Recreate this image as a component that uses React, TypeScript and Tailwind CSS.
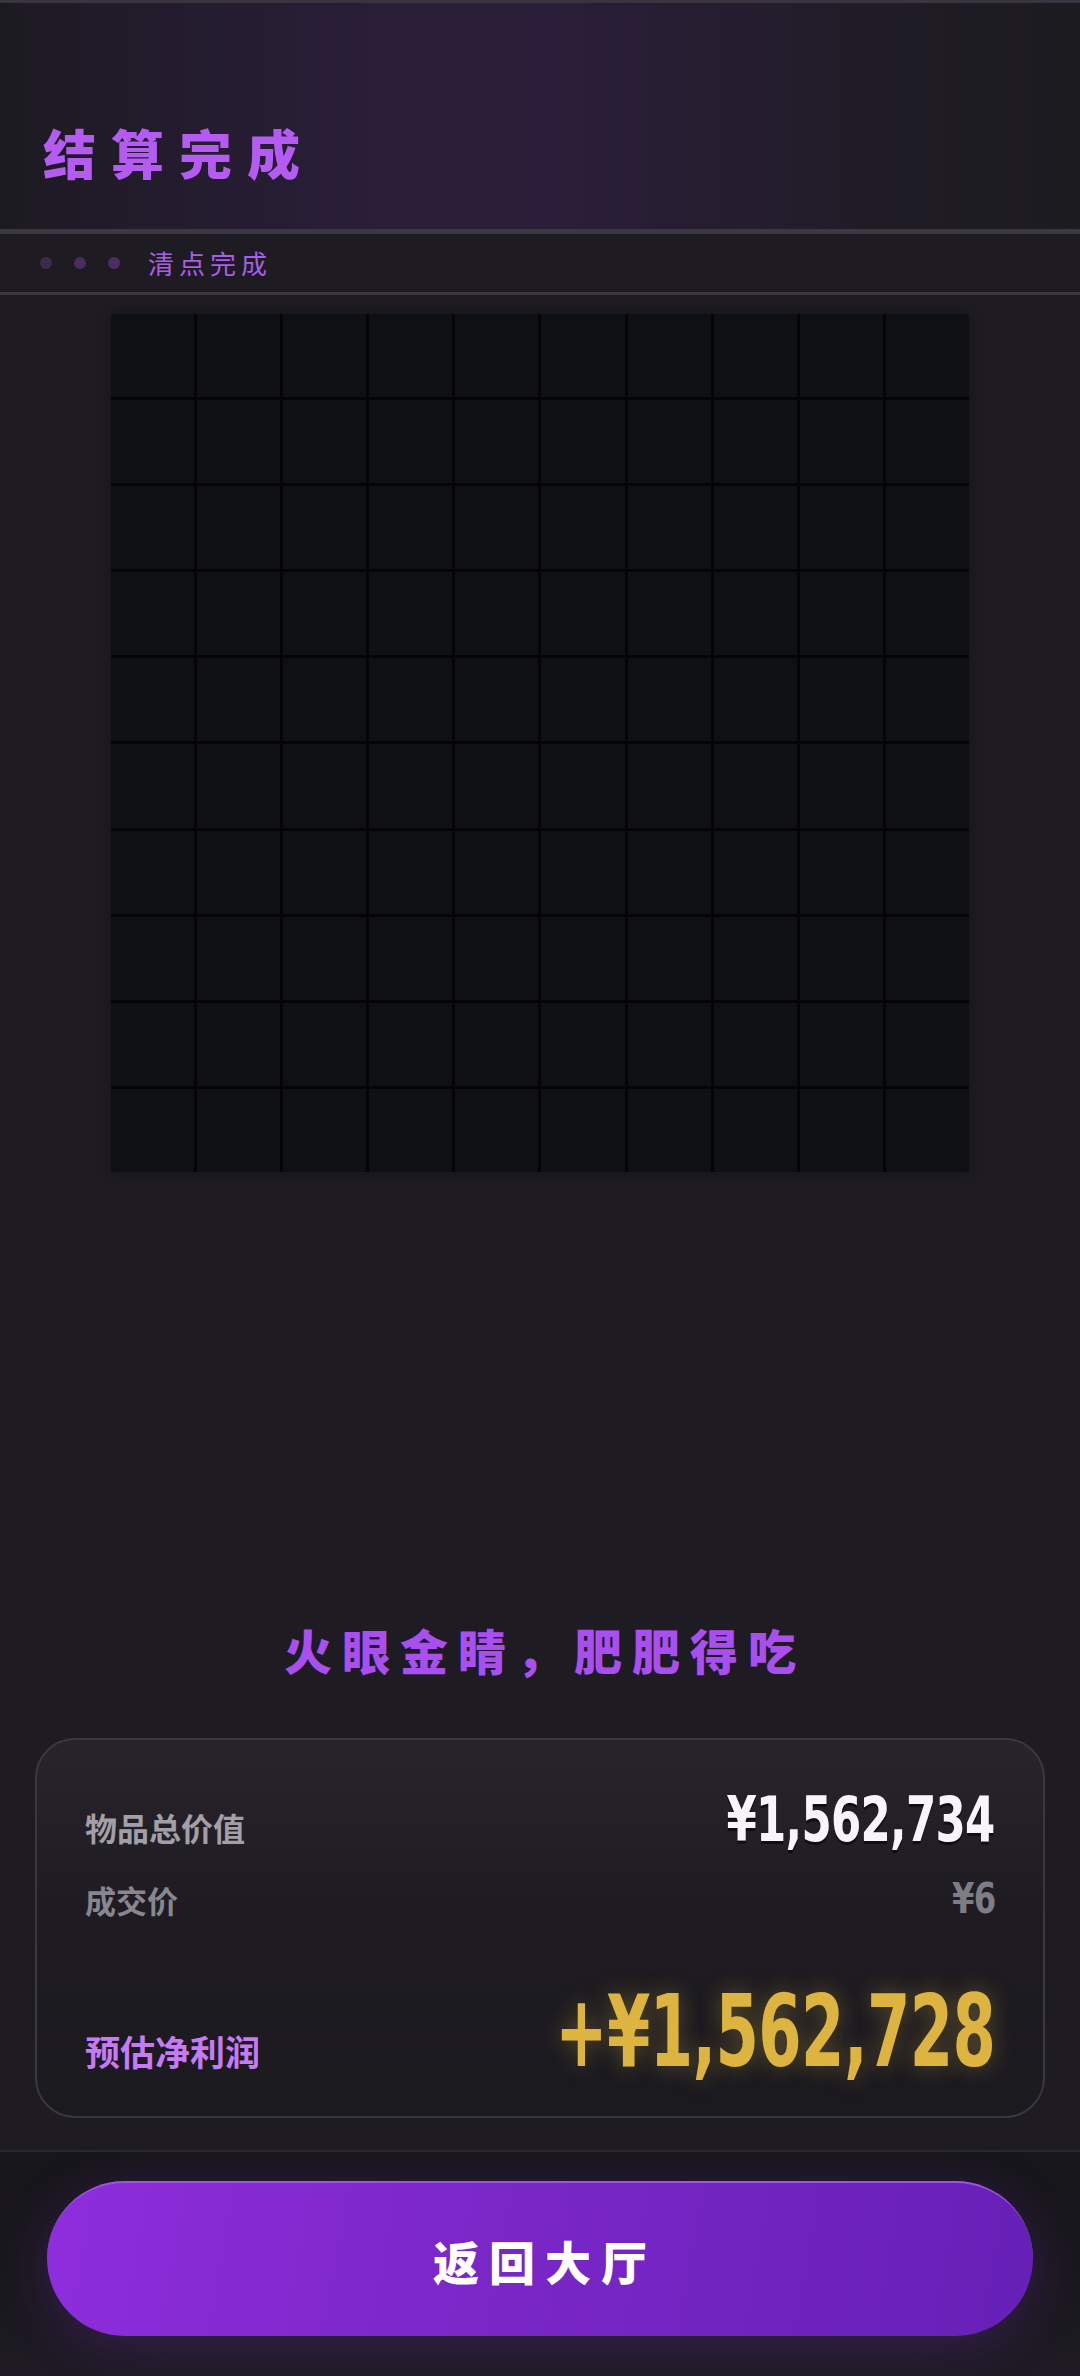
import React from "react";

const CELLS = Array.from({ length: 100 }, (_, i) => i);

function Row({
	label,
	value,
	labelClass,
	valueClass,
	className,
}: {
	label: string;
	value: string;
	labelClass: string;
	valueClass: string;
	className?: string;
}) {
	return (
		<div className={`flex flex-row items-baseline justify-between ${className ?? ""}`}>
			<span className={`font-bold leading-none ${labelClass}`}>{label}</span>
			<span className={`font-['DejaVu_Sans',sans-serif] font-bold leading-none origin-right tracking-[-1px] ${valueClass}`}>
				{value}
			</span>
		</div>
	);
}

export default function App() {
	return (
		<div className="w-[1080px] h-[2376px] flex flex-col overflow-hidden bg-[#1e1c22] font-['Noto_Sans_CJK_SC',sans-serif]">
			{/* header */}
			<header className="h-[229px] flex items-end pl-[43px] pb-[50px] border-t-[3px] border-[#3a3340] bg-[linear-gradient(90deg,#1c1a21_0%,#241c2f_18%,#2a1e38_35%,#2b1e3a_50%,#261d31_65%,#1f1c25_82%,#1c1b20_100%)]">
				<h1 className="text-[53px] leading-none font-black tracking-[15px] text-[#b45cf2]">结算完成</h1>
			</header>

			{/* status bar */}
			<div className="h-[66px] flex items-center pl-[40px] gap-[22px] bg-[#1e1c22] border-t-[5px] border-[#3b3842] border-b-[3px] border-b-[#38363e]">
				<div className="flex items-center gap-[22px]">
					<span className="w-[12px] h-[12px] rounded-full bg-[#3d2a50]" />
					<span className="w-[12px] h-[12px] rounded-full bg-[#482d60]" />
					<span className="w-[12px] h-[12px] rounded-full bg-[#4a2e63]" />
				</div>
				<span className="ml-[6px] text-[26px] leading-none tracking-[5px] text-[#a660e6]">清点完成</span>
			</div>

			{/* board */}
			<main className="flex flex-col items-center">
				<div className="mt-[19px] w-[858px] h-[858px] grid grid-cols-10 grid-rows-10 gap-[3px] bg-[#050507] shadow-[0_0_12px_rgba(0,0,0,0.35)]">
					{CELLS.map((c) => (
						<div key={c} className="bg-[#0f1013]" />
					))}
				</div>
				<p className="mt-[453px] text-[48px] leading-none font-black tracking-[10px] text-[#a94ff0] pl-[10px]">
					火眼金睛，肥肥得吃
				</p>
			</main>

			{/* summary card */}
			<section className="mt-[65px] mx-[35px] h-[380px] rounded-[40px] border-2 border-[#3a383f] bg-[linear-gradient(180deg,#27252b_0%,#1e1c22_45%,#1b1a1f_100%)] px-[48px] pt-[48px]">
				<Row
					label="物品总价值"
					value="¥1,562,734"
					labelClass="text-[32px] text-[#a29fa7]"
					valueClass="text-[63px] scale-x-[0.69] text-[#f7f5fb] [text-shadow:0_3px_0_rgba(0,0,0,0.55)]"
				/>
				<Row
					className="mt-[27px]"
					label="成交价"
					value="¥6"
					labelClass="text-[31px] text-[#88868e]"
					valueClass="text-[42px] scale-x-[0.77] text-[#7e7c84]"
				/>
				<Row
					className="mt-[62px]"
					label="预估净利润"
					value="+¥1,562,728"
					labelClass="text-[35px] text-[#c77af5]"
					valueClass="text-[99px] scale-x-[0.63] text-[#dcb43f] [text-shadow:0_0_28px_rgba(220,180,63,0.35)]"
				/>
			</section>

			{/* footer */}
			<footer className="mt-[32px] flex-1 flex flex-col border-t-2 border-[#2a282f] bg-[linear-gradient(180deg,#17161b_0%,#1a181e_60%,#1e1b24_100%)]">
				<button className="mt-[29px] mx-[47px] h-[155px] rounded-full border-t-2 border-[#9b55e3] bg-[linear-gradient(100deg,#8e2ddc_0%,#7a27c8_45%,#6620b6_100%)] shadow-[0_10px_50px_rgba(130,45,210,0.25)] flex items-center justify-center">
					<span className="text-[46px] leading-none font-black tracking-[10px] pl-[10px] text-white">返回大厅</span>
				</button>
			</footer>
		</div>
	);
}
